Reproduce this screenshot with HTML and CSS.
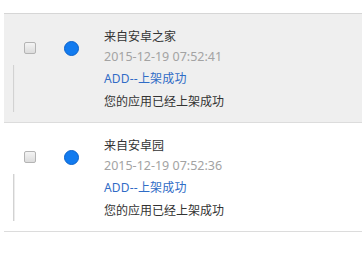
FILE: index.html
```html
<!DOCTYPE html>
<html>
<head>
<meta charset="utf-8">
<link rel="stylesheet" href="styles.css">
</head>
<body>
<div class="list">
  <div class="item item-active">
    <div class="rail"><span class="rail-line"></span></div>
    <div class="check-col"><span class="checkbox"></span></div>
    <div class="dot-col"><span class="dot"></span></div>
    <div class="text">
      <div class="title">来自安卓之家</div>
      <div class="date">2015-12-19 07:52:41</div>
      <div class="action">ADD--上架成功</div>
      <div class="desc">您的应用已经上架成功</div>
    </div>
  </div>
  <div class="item">
    <div class="rail"><span class="rail-line"></span></div>
    <div class="check-col"><span class="checkbox"></span></div>
    <div class="dot-col"><span class="dot"></span></div>
    <div class="text">
      <div class="title">来自安卓园</div>
      <div class="date">2015-12-19 07:52:36</div>
      <div class="action">ADD--上架成功</div>
      <div class="desc">您的应用已经上架成功</div>
    </div>
  </div>
</div>
</body>
</html>
```
FILE: styles.css
```css
html, body {
  margin: 0;
  padding: 0;
  background: #ffffff;
}
body {
  font-family: "Noto Sans", "Noto Sans CJK SC", sans-serif;
  font-size: 12px;
  color: #333333;
}
.list {
  padding-top: 13px;
  padding-left: 4px;
}
.item {
  display: flex;
  height: 108px;
  border-bottom: 1px solid #dcdcdc;
  background: #ffffff;
}
.item-active {
  background: #efefef;
  border-top: 1px solid #d6d6d6;
}
.rail {
  width: 20px;
  flex: none;
}
.rail-line {
  display: block;
  margin-top: 51px;
  margin-left: 9px;
  width: 1px;
  height: 47px;
  background: #d2d2d2;
  border-right: 1px solid #ececec;
}
.check-col {
  width: 40px;
  flex: none;
}
.checkbox {
  display: block;
  margin-top: 28px;
  width: 10px;
  height: 10px;
  border: 1px solid #b4b4b4;
  border-radius: 2px;
  background: linear-gradient(#f4f4f4, #dcdcdc);
}
.dot-col {
  width: 40px;
  flex: none;
}
.dot {
  display: block;
  margin-top: 27px;
  width: 13px;
  height: 13px;
  border-radius: 50%;
  background: #127bef;
  border: 1px solid #0a62cc;
}
.text {
  padding-top: 13px;
  line-height: 20px;
}
.title {
  color: #333333;
}
.date {
  color: #a3a3a3;
  font-size: 12.5px;
}
.action {
  margin-top: 2px;
  color: #2f6cc6;
  letter-spacing: 0.2px;
}
.desc {
  margin-top: 3px;
  color: #333333;
}
```
